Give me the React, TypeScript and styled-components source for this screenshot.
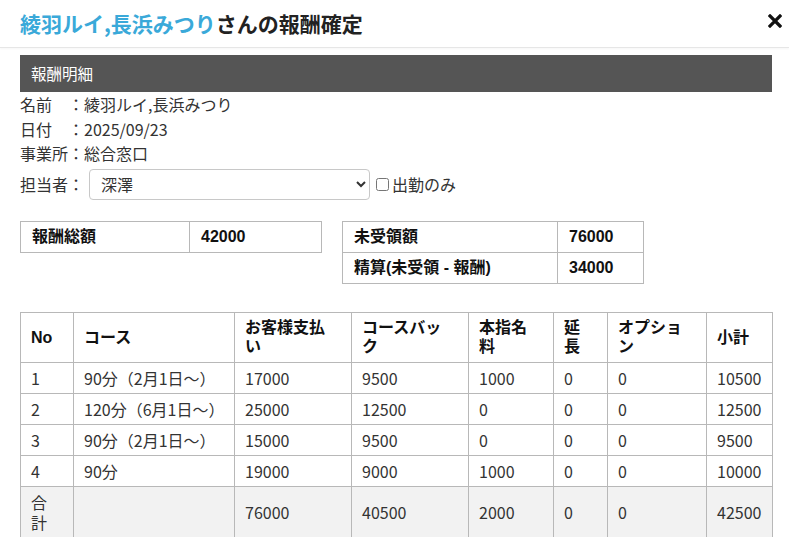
import React from "react";
import styled, { createGlobalStyle } from "styled-components";

const GlobalStyle = createGlobalStyle`
  html, body { margin: 0; padding: 0; background: #fff; }
  body {
    font-family: "Noto Sans CJK JP", "Noto Sans", sans-serif;
    color: #333;
    overflow: hidden;
  }
  * { box-sizing: border-box; }
`;

const Page = styled.div`
  width: 789px;
  height: 537px;
  overflow: hidden;
  background: #fff;
`;

const Header = styled.header`
  height: 48px;
  display: flex;
  align-items: center;
  justify-content: space-between;
  padding: 0 7px 2px 20px;
  border-bottom: 1px solid #e6e6e6;
  box-shadow: 0 1px 2px rgba(0, 0, 0, 0.04);
`;

const Title = styled.h1`
  margin: 0;
  font-size: 21px;
  line-height: 26px;
  font-weight: 700;
  color: #222;
  font-family: "Noto Sans CJK JP", sans-serif;
`;

const Names = styled.span`
  color: #3aa9d9;
`;

const CloseButton = styled.button`
  border: 0;
  background: none;
  padding: 0;
  width: 14px;
  height: 14px;
  display: flex;
  cursor: pointer;
  margin-bottom: 3px;
`;

const Body = styled.div`
  padding: 7px 17px 0 20px;
`;

const SectionBar = styled.div`
  height: 37px;
  background: #555;
  color: #fff;
  font-size: 15.5px;
  line-height: 37px;
  padding-left: 11px;
`;

const InfoList = styled.div`
  display: flex;
  flex-direction: column;
`;

const InfoLine = styled.div`
  font-size: 16px;
  line-height: 24.5px;
  color: #333;
`;

const StaffRow = styled.div`
  display: flex;
  align-items: center;
  margin-top: 3px;
  font-size: 16px;
  color: #333;
`;

const StaffLabel = styled.span`
  width: 69px;
  line-height: 24px;
`;

const Select = styled.select`
  width: 281px;
  height: 31px;
  border: 1px solid #c8c8c8;
  border-radius: 4px;
  background: #fff;
  font-family: "Noto Sans CJK JP", sans-serif;
  font-size: 16px;
  color: #333;
  padding: 0 4px 0 7px;
`;

const CheckLabel = styled.label`
  display: flex;
  align-items: center;
  line-height: 24px;
`;

const Checkbox = styled.input`
  width: 13px;
  height: 13px;
  margin: 0 3px 0 6px;
`;

const SummaryRow = styled.div`
  display: flex;
  align-items: flex-start;
  gap: 20px;
  margin-top: 21px;
`;

const SummaryTable = styled.table<{ $w: number }>`
  width: ${(p) => p.$w}px;
  border-collapse: collapse;
  table-layout: fixed;
  font-family: "Liberation Sans", "Noto Sans CJK JP", sans-serif;
  font-weight: 700;
  font-size: 16px;
  color: #111;
`;

const SummaryCell = styled.td`
  border: 1px solid #b8b8b8;
  padding: 5px 10px 5px 11px;
  line-height: 20px;
  height: 31px;
`;

const MainTable = styled.table`
  width: 752px;
  margin-top: 28px;
  border-collapse: collapse;
  table-layout: fixed;
  font-size: 16px;
  color: #333;
`;

const Th = styled.th`
  border: 1px solid #b8b8b8;
  padding: 5px 13px 5px 10px;
  text-align: left;
  font-family: "Liberation Sans", "Noto Sans CJK JP", sans-serif;
  font-weight: 700;
  line-height: 19px;
  height: 50px;
  color: #111;
  vertical-align: middle;
`;

const Tr = styled.tr<{ $total?: boolean }>`
  background: ${(p) => (p.$total ? "#f2f2f2" : "#fff")};
`;

const Td = styled.td<{ $narrow?: boolean }>`
  border: 1px solid #b8b8b8;
  padding: 5px ${(p) => (p.$narrow ? "14px" : "6px")} 5px 10px;
  line-height: 20px;
  height: 31px;
  white-space: ${(p) => (p.$narrow ? "normal" : "nowrap")};
  vertical-align: middle;
`;

const columns = [53, 161, 117, 117, 85, 54, 99, 66];
const headers = ["No", "コース", "お客様支払い", "コースバック", "本指名料", "延長", "オプション", "小計"];

const rows: string[][] = [
  ["1", "90分（2月1日〜）", "17000", "9500", "1000", "0", "0", "10500"],
  ["2", "120分（6月1日〜）", "25000", "12500", "0", "0", "0", "12500"],
  ["3", "90分（2月1日〜）", "15000", "9500", "0", "0", "0", "9500"],
  ["4", "90分", "19000", "9000", "1000", "0", "0", "10000"],
];

const totals = ["合計", "", "76000", "40500", "2000", "0", "0", "42500"];

function CloseIcon() {
  return (
    <svg width="14" height="14" viewBox="0 0 14 14">
      <path d="M2 2 L12 12 M12 2 L2 12" stroke="#111" strokeWidth="3.2" strokeLinecap="square" />
    </svg>
  );
}

export default function App() {
  return (
    <>
      <GlobalStyle />
      <Page>
        <Header>
          <Title>
            <Names>綾羽ルイ,長浜みつり</Names>さんの報酬確定
          </Title>
          <CloseButton aria-label="閉じる">
            <CloseIcon />
          </CloseButton>
        </Header>
        <Body>
          <SectionBar>報酬明細</SectionBar>
          <InfoList>
            <InfoLine>名前　：綾羽ルイ,長浜みつり</InfoLine>
            <InfoLine>日付　：2025/09/23</InfoLine>
            <InfoLine>事業所：総合窓口</InfoLine>
          </InfoList>
          <StaffRow>
            <StaffLabel>担当者：</StaffLabel>
            <Select defaultValue="深澤">
              <option value="深澤">深澤</option>
            </Select>
            <CheckLabel>
              <Checkbox type="checkbox" />
              出勤のみ
            </CheckLabel>
          </StaffRow>
          <SummaryRow>
            <SummaryTable $w={301}>
              <colgroup>
                <col style={{ width: 169 }} />
                <col style={{ width: 132 }} />
              </colgroup>
              <tbody>
                <tr>
                  <SummaryCell>報酬総額</SummaryCell>
                  <SummaryCell>42000</SummaryCell>
                </tr>
              </tbody>
            </SummaryTable>
            <SummaryTable $w={301}>
              <colgroup>
                <col style={{ width: 215 }} />
                <col style={{ width: 86 }} />
              </colgroup>
              <tbody>
                <tr>
                  <SummaryCell>未受領額</SummaryCell>
                  <SummaryCell>76000</SummaryCell>
                </tr>
                <tr>
                  <SummaryCell>精算(未受領 - 報酬)</SummaryCell>
                  <SummaryCell>34000</SummaryCell>
                </tr>
              </tbody>
            </SummaryTable>
          </SummaryRow>
          <MainTable>
            <colgroup>
              {columns.map((w, i) => (
                <col key={i} style={{ width: w }} />
              ))}
            </colgroup>
            <thead>
              <tr>
                {headers.map((h) => (
                  <Th key={h}>{h}</Th>
                ))}
              </tr>
            </thead>
            <tbody>
              {rows.map((r) => (
                <Tr key={r[0]}>
                  {r.map((c, i) => (
                    <Td key={i}>{c}</Td>
                  ))}
                </Tr>
              ))}
              <Tr $total>
                {totals.map((c, i) => (
                  <Td key={i} $narrow={i === 0}>
                    {c}
                  </Td>
                ))}
              </Tr>
            </tbody>
          </MainTable>
        </Body>
      </Page>
    </>
  );
}
